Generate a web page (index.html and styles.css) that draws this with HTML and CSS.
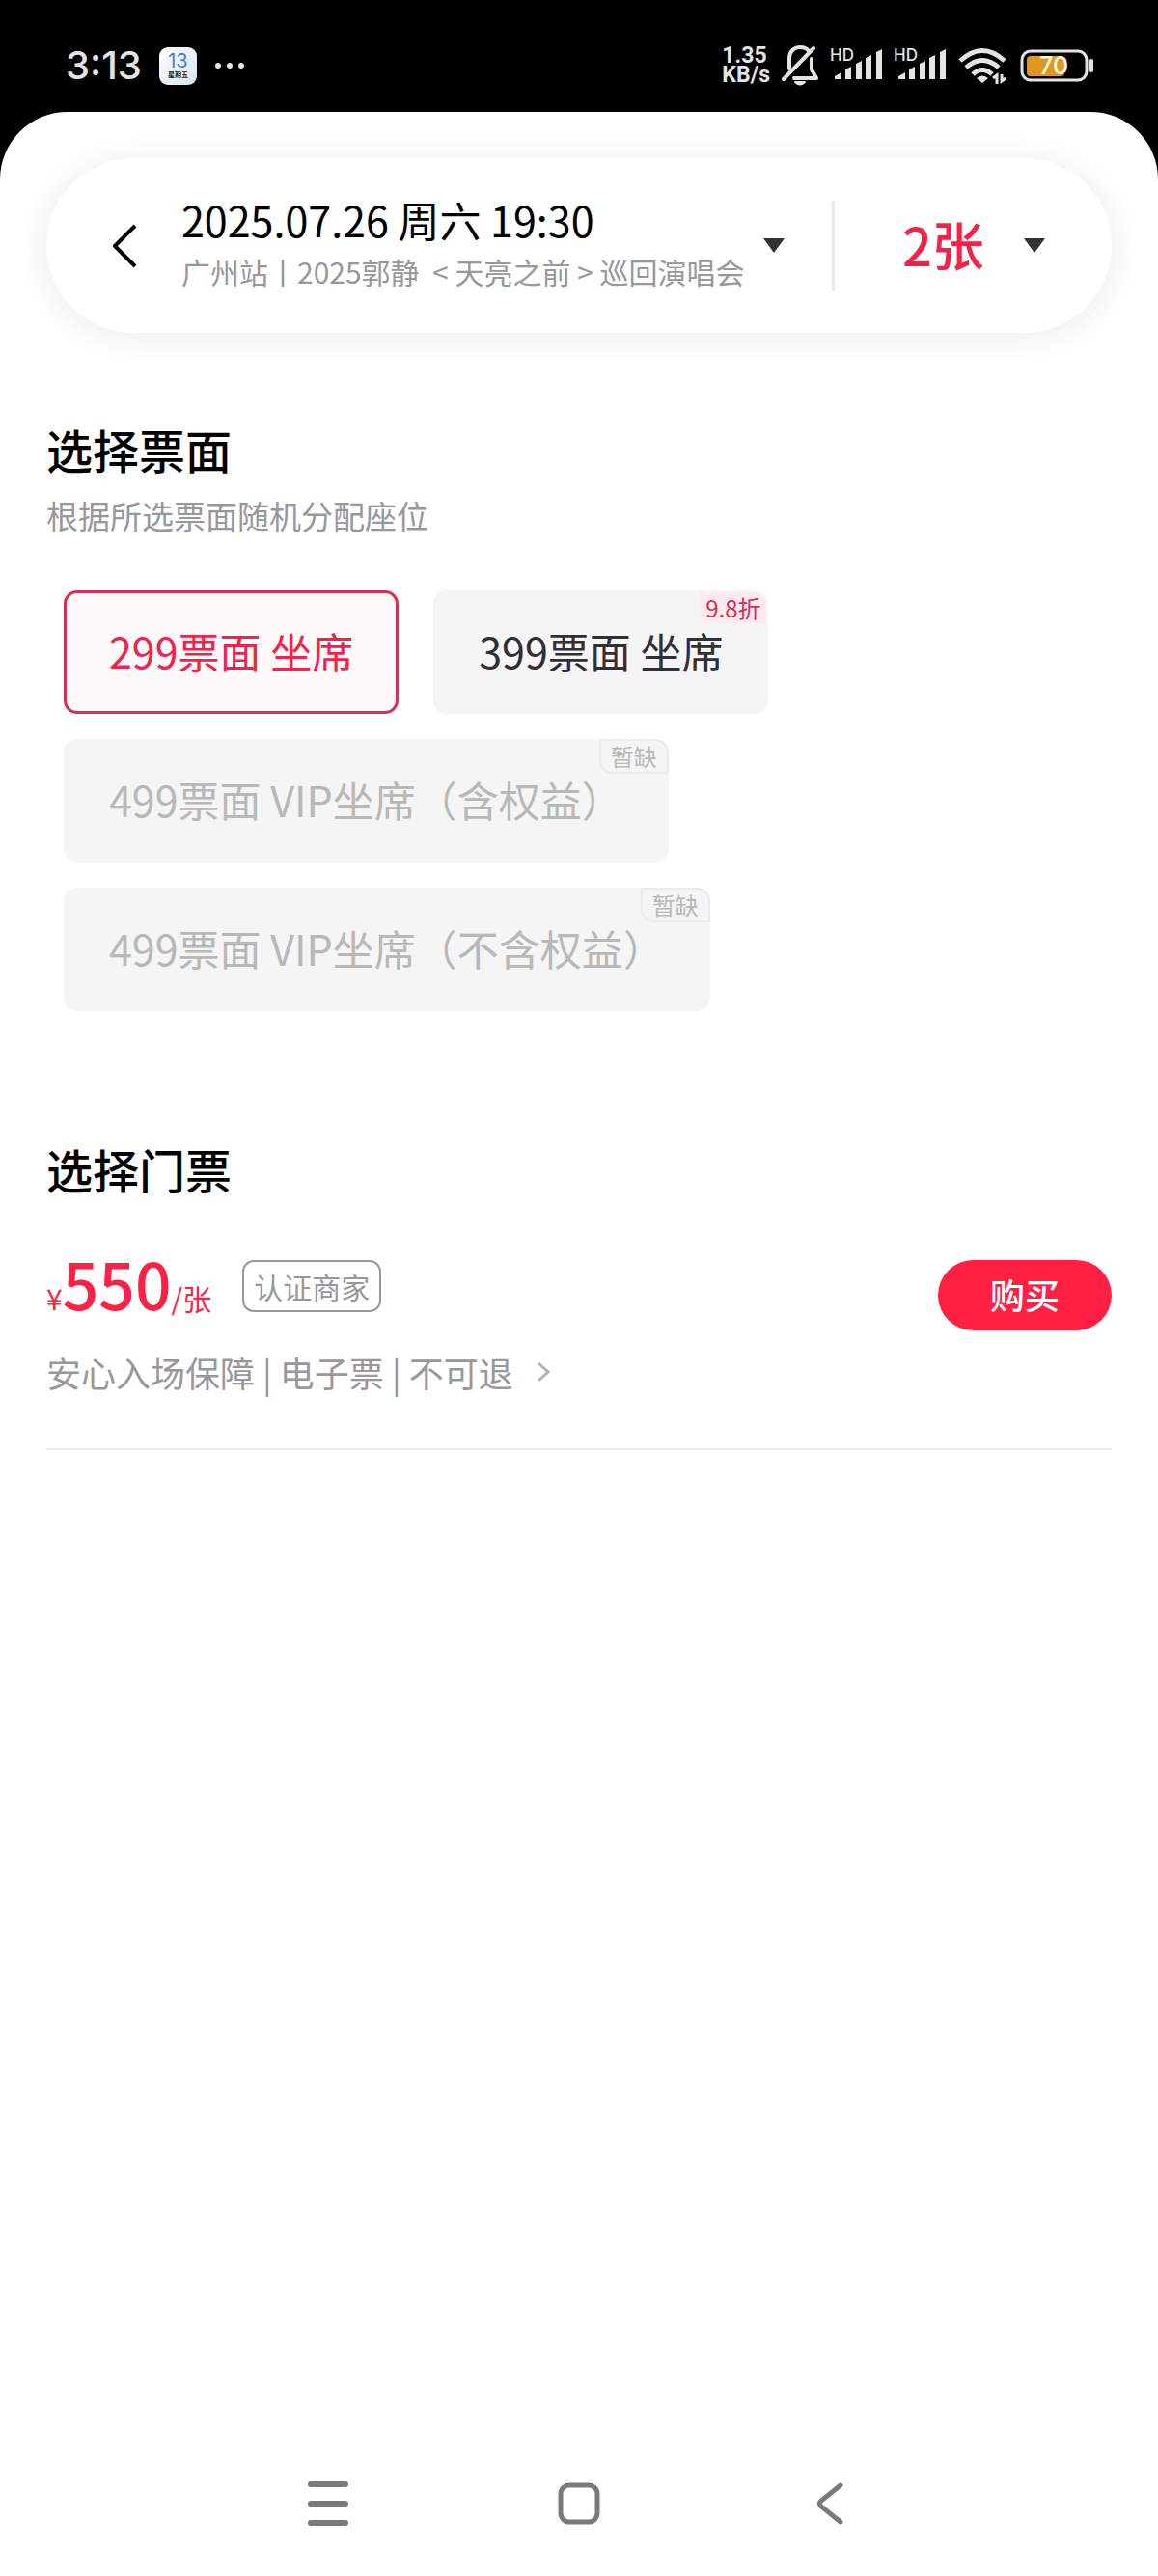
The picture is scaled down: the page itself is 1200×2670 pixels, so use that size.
FILE: index.html
```html
<!DOCTYPE html>
<html lang="zh-CN">
<head>
    <meta charset="UTF-8">
    <meta name="viewport" content="width=device-width, initial-scale=1.0">
    <title>选择票面</title>
    <link rel="stylesheet" href="styles.css">
</head>
<body>
    <div class="status-bar">
        <span class="clock">3:13</span>
        <span class="calendar">
            <span class="calendar-day">13</span>
            <span class="calendar-week">星期五</span>
        </span>
        <svg class="dots" width="32" height="8" viewBox="0 0 32 8">
            <circle cx="4" cy="4" r="3"/><circle cx="16" cy="4" r="3"/><circle cx="28" cy="4" r="3"/>
        </svg>
        <div class="status-icons">
            <span class="speed">1.35<br>KB/s</span>
            <svg width="38" height="42" viewBox="0 0 38 42" fill="none" stroke="#e4e4e4" stroke-width="4" stroke-linecap="round" stroke-linejoin="round">
                <path d="M8 24 V14 C8 6 13 2 19 2 C23 2 26 3 28 6"/>
                <path d="M2 35 L33 3"/>
                <path d="M31 14 V25 L36 34 H13"/>
                <path d="M14 38 H24 Q19 43 14 38 Z" fill="#e4e4e4" stroke-width="2"/>
            </svg>
            <svg width="54" height="48" viewBox="0 -4 54 48" fill="#e4e4e4">
                <text x="0" y="15" class="hd">HD</text>
                <path d="M5 34 V31 L12 27 V34 Z M16 24 L22 21 V34 H16 Z M27 18 L33 15 V34 H27 Z M37 12 L43 9 V34 H37 Z M48 6 L54 3 V34 H48 Z"/>
            </svg>
            <svg width="54" height="48" viewBox="0 -4 54 48" fill="#e4e4e4">
                <text x="0" y="15" class="hd">HD</text>
                <path d="M5 34 V31 L12 27 V34 Z M16 24 L22 21 V34 H16 Z M27 18 L33 15 V34 H27 Z M37 12 L43 9 V34 H37 Z M48 6 L54 3 V34 H48 Z"/>
            </svg>
            <svg width="52" height="40" viewBox="0 0 52 40" fill="none" stroke="#e4e4e4" stroke-width="5">
                <path d="M3 15 Q26 -6 49 15"/>
                <path d="M9 22 Q26 7 43 22"/>
                <path d="M16 29 Q26 20 36 29"/>
                <path d="M20 33 Q26 28 32 33 L26 38 Z" fill="#e4e4e4" stroke="none"/>
                <path d="M37 33 L41 30 V39 M50 33 L46 36 V29" stroke-width="3"/>
            </svg>
            <svg width="78" height="36" viewBox="0 0 78 36">
                <rect x="3" y="3" width="67" height="30" rx="9" fill="none" stroke="#e4e4e4" stroke-width="3"/>
                <rect x="8" y="8" width="39" height="21" rx="4" fill="#dc9a20"/>
                <path d="M75 13 V23" stroke="#e4e4e4" stroke-width="4" stroke-linecap="round"/>
                <text x="36" y="27" class="battery-level">70</text>
            </svg>
        </div>
    </div>

    <main class="sheet">
        <header class="session-bar">
            <button class="back" type="button" aria-label="返回">
                <svg width="26" height="46" viewBox="0 0 26 46" fill="none" stroke="#000" stroke-width="4">
                    <path d="M24 2 L3 23 L24 44" stroke-linejoin="round"/>
                </svg>
            </button>
            <button class="session" type="button">
                <span class="session-text">
                    <span class="session-date">2025.07.26 周六 19:30</span>
                    <span class="session-name">广州站丨2025郭静&nbsp; &lt; 天亮之前 &gt; 巡回演唱会</span>
                </span>
                <svg class="arrow" width="24" height="18" viewBox="0 0 24 18">
                    <path d="M1 1 H23 L12 16 Z"/>
                </svg>
            </button>
            <label class="count">
                <select class="count-select" aria-label="张数">
                    <option>1张</option>
                    <option selected>2张</option>
                    <option>3张</option>
                    <option>4张</option>
                </select>
                <svg class="arrow" width="24" height="18" viewBox="0 0 24 18">
                    <path d="M1 1 H23 L12 16 Z"/>
                </svg>
            </label>
        </header>

        <section class="prices">
            <h2>选择票面</h2>
            <p class="hint">根据所选票面随机分配座位</p>
            <div class="options">
                <button class="option selected" type="button">299票面 坐席</button>
                <button class="option" type="button">399票面 坐席<span class="tag discount">9.8折</span></button>
                <button class="option" type="button" disabled>499票面 VIP坐席（含权益）<span class="tag">暂缺</span></button>
                <button class="option" type="button" disabled>499票面 VIP坐席（不含权益）<span class="tag">暂缺</span></button>
            </div>
        </section>

        <section class="tickets">
            <h2>选择门票</h2>
            <div class="ticket">
                <div class="ticket-info">
                    <div class="ticket-price">
                        <span class="price"><small>¥</small>550<small>/张</small></span>
                        <span class="seller">认证商家</span>
                    </div>
                    <a class="terms" href="#">安心入场保障 | 电子票 | 不可退
                        <svg width="14" height="22" viewBox="0 0 14 22" fill="none" stroke="#b4b4ba" stroke-width="3">
                            <path d="M2 2 L12 11 L2 20"/>
                        </svg>
                    </a>
                </div>
                <button class="buy" type="button">购买</button>
            </div>
        </section>
    </main>

    <nav class="system-nav">
        <button type="button" aria-label="最近任务">
            <svg width="44" height="48" viewBox="0 0 44 48" fill="none" stroke="#7a7a7a" stroke-width="6" stroke-linecap="round">
                <path d="M4 4 H40 M4 24 H40 M4 44 H40"/>
            </svg>
        </button>
        <button type="button" aria-label="主屏幕">
            <svg width="44" height="54" viewBox="0 0 44 54" fill="none" stroke="#7a7a7a" stroke-width="5">
                <rect x="3" y="8" width="38" height="38" rx="9"/>
            </svg>
        </button>
        <button type="button" aria-label="返回上一级">
            <svg width="28" height="46" viewBox="0 0 28 46" fill="none" stroke="#7a7a7a" stroke-width="5" stroke-linecap="round">
                <path d="M25 4 L5 20 Q2 23 5 26 L25 42"/>
            </svg>
        </button>
    </nav>
</body>
</html>
```
FILE: styles.css
```css
* {
    box-sizing: border-box;
}
body {
    margin: 0;
    min-height: 100vh;
    display: flex;
    flex-direction: column;
    background: #000;
    color: #000;
    font-family: 'Noto Sans CJK SC', sans-serif;
}
button,
select {
    font-family: inherit;
    border: none;
    background: none;
    padding: 0;
    cursor: pointer;
}
svg {
    display: block;
    flex-shrink: 0;
}

/* status bar */
.status-bar {
    height: 116px;
    padding: 20px 66px 0 68px;
    display: flex;
    align-items: center;
    color: #e4e4e4;
    font-family: Inter, 'Noto Sans CJK SC', sans-serif;
}
.clock {
    font-size: 40px;
    font-weight: 500;
    line-height: 48px;
}
.calendar {
    width: 39px;
    height: 39px;
    margin: 0 18px;
    border-radius: 9px;
    background: linear-gradient(135deg, #fff, #d8e4f2);
    display: flex;
    flex-direction: column;
    align-items: center;
    justify-content: center;
}
.calendar-day {
    font-size: 20px;
    line-height: 20px;
    color: #3d7fdc;
}
.calendar-week {
    font-size: 7px;
    line-height: 10px;
    font-weight: 700;
    color: #222;
}
.dots {
    fill: #e4e4e4;
}
.status-icons {
    margin-left: auto;
    display: flex;
    align-items: center;
    gap: 12px;
}
.speed {
    font-family: Roboto, sans-serif;
    font-size: 23px;
    line-height: 20px;
    font-weight: 700;
}
.hd {
    font-size: 17px;
    font-weight: 500;
}
.battery-level {
    font-size: 25px;
    font-weight: 500;
    fill: #fff3dc;
    text-anchor: middle;
}

/* white sheet */
.sheet {
    flex: 1;
    padding: 48px 48px 0;
    background: #fff;
    border-radius: 70px 70px 0 0;
}
.session-bar {
    display: flex;
    align-items: center;
    height: 181px;
    padding: 0 68px;
    border-radius: 91px;
    background: #fff;
    box-shadow: 0 4px 40px rgba(0, 0, 0, 0.08);
}
.back {
    margin-right: 46px;
}
.session {
    flex: 1;
    display: flex;
    align-items: center;
    justify-content: space-between;
    text-align: left;
}
.session-text {
    display: flex;
    flex-direction: column;
    padding-bottom: 4px;
}
.session-date {
    font-size: 43px;
    line-height: 56px;
    color: #000;
}
.session-name {
    font-size: 30px;
    line-height: 52px;
    color: #97979c;
}
.arrow {
    fill: #333;
}
.count {
    display: flex;
    align-items: center;
    gap: 40px;
    height: 94px;
    margin-left: 48px;
    padding-left: 70px;
    border-left: 3px solid #e9e9eb;
}
.count-select {
    appearance: none;
    padding-bottom: 4px;
    font-size: 54px;
    font-weight: 500;
    line-height: 78px;
    color: #f0234a;
}

h2 {
    margin: 88px 0 13px;
    font-size: 48px;
    font-weight: 500;
    line-height: 64px;
}
.hint {
    margin: 0;
    font-size: 33px;
    line-height: 48px;
    color: #97979c;
}
.options {
    display: flex;
    flex-wrap: wrap;
    gap: 26px 36px;
    margin: 54px 18px 0;
    padding-right: 250px;
}
.option {
    position: relative;
    height: 128px;
    padding: 0 47px 4px;
    border-radius: 14px;
    background: #f5f5f6;
    font-size: 43px;
    color: #2f2f36;
}
.option.selected {
    padding: 0 44px 4px;
    border: 3px solid #d4304f;
    background: #fff9fb;
    color: #f0234a;
}
.option:disabled {
    color: #b8b8b8;
    cursor: default;
}
.tag {
    position: absolute;
    top: 0;
    right: 0;
    padding: 0 10px;
    border: 2px solid #ebebeb;
    border-radius: 0 14px 0 14px;
    font-size: 24px;
    line-height: 32px;
}
.tag.discount {
    top: 2px;
    right: 2px;
    padding: 0 6px;
    border: none;
    border-radius: 0 12px 0 12px;
    background: #fdeaee;
    color: #d4304f;
}

/* tickets */
.tickets h2 {
    margin: 131px 0 63px;
}
.ticket {
    display: flex;
    align-items: flex-start;
    justify-content: space-between;
    padding-bottom: 57px;
    border-bottom: 2px solid #e9e9eb;
}
.ticket-price {
    display: flex;
    align-items: center;
    gap: 32px;
    height: 54px;
    margin-bottom: 40px;
}
.price {
    padding-top: 8px;
    font-size: 66px;
    font-weight: 500;
    line-height: 48px;
    color: #fb2247;
}
.price small {
    font-size: 30px;
    font-weight: 400;
}
.seller {
    padding: 0 10px;
    border: 2px solid #97979c;
    border-radius: 12px;
    font-size: 30px;
    line-height: 50px;
    color: #97979c;
}
.terms {
    display: flex;
    align-items: center;
    gap: 24px;
    font-size: 36px;
    line-height: 44px;
    color: #97979c;
    text-decoration: none;
}
.buy {
    width: 180px;
    height: 73px;
    padding-bottom: 3px;
    border-radius: 37px;
    background: #ff2044;
    font-size: 36px;
    font-weight: 500;
    color: #fff;
}

/* system navigation */
.system-nav {
    display: flex;
    justify-content: center;
    height: 150px;
    background: #fff;
}
.system-nav button {
    width: 260px;
    display: flex;
    align-items: center;
    justify-content: center;
}
```
